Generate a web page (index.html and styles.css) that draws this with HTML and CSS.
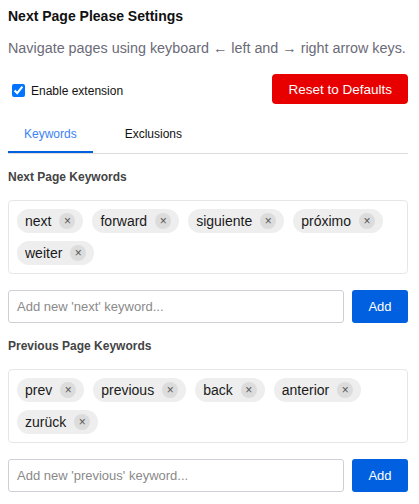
FILE: index.html
```html
<!DOCTYPE html>
<html>
<head>
<meta charset="utf-8">
<link rel="stylesheet" href="styles.css">
</head>
<body>
<div class="page">
  <h1 class="title">Next Page Please Settings</h1>
  <p class="desc">Navigate pages using keyboard ← left and → right arrow keys.</p>
  <div class="toprow">
    <label class="enable"><input type="checkbox" checked> Enable extension</label>
    <button class="reset">Reset to Defaults</button>
  </div>
  <div class="tabs">
    <div class="tab active">Keywords</div>
    <div class="tab">Exclusions</div>
  </div>
  <h2 class="heading">Next Page Keywords</h2>
  <div class="tagbox">
    <span class="tag">next<span class="x">×</span></span>
    <span class="tag">forward<span class="x">×</span></span>
    <span class="tag">siguiente<span class="x">×</span></span>
    <span class="tag">próximo<span class="x">×</span></span>
    <span class="tag">weiter<span class="x">×</span></span>
  </div>
  <div class="addrow">
    <input class="field" type="text" placeholder="Add new 'next' keyword...">
    <button class="add">Add</button>
  </div>
  <h2 class="heading">Previous Page Keywords</h2>
  <div class="tagbox">
    <span class="tag">prev<span class="x">×</span></span>
    <span class="tag">previous<span class="x">×</span></span>
    <span class="tag">back<span class="x">×</span></span>
    <span class="tag">anterior<span class="x">×</span></span>
    <span class="tag">zurück<span class="x">×</span></span>
  </div>
  <div class="addrow">
    <input class="field" type="text" placeholder="Add new 'previous' keyword...">
    <button class="add">Add</button>
  </div>
</div>
</body>
</html>
```
FILE: styles.css
```css
* { box-sizing: border-box; }
body {
  margin: 8px;
  font-family: "Liberation Sans", Arial, sans-serif;
  color: #111;
  background: #fff;
}
.page { width: 400px; }
.title {
  margin: 0;
  font-size: 14px;
  line-height: 17px;
  font-weight: bold;
  color: #111;
}
.desc {
  margin: 14px 0 0;
  font-size: 14.35px;
  line-height: 18px;
  color: #6b6b78;
  white-space: nowrap;
}
.toprow {
  margin-top: 17px;
  display: flex;
  justify-content: space-between;
  align-items: center;
}
.enable {
  display: flex;
  align-items: center;
  margin-top: 3px;
  font-size: 12px;
  color: #111;
  gap: 6px;
}
.enable input {
  margin: 0 0 0 4px;
  width: 13px;
  height: 13px;
}
.reset {
  height: 30px;
  padding: 0 16px;
  border: none;
  border-radius: 4px;
  background: #e80000;
  color: #fff;
  font-family: inherit;
  font-size: 13.5px;
}
.tabs {
  margin-top: 15px;
  display: flex;
  gap: 16px;
  border-bottom: 1px solid #ddd;
}
.tab {
  padding: 8px 16px 9px;
  font-size: 12px;
  line-height: 15px;
  color: #111;
  border-bottom: 2px solid transparent;
}
.tab.active {
  color: #3b82f6;
  border-bottom-color: #0060df;
}
.heading {
  margin: 15px 0 15px;
  font-size: 12px;
  line-height: 16px;
  font-weight: bold;
  color: #444;
}
.tagbox {
  border: 1px solid #e6e6e6;
  border-radius: 4px;
  padding: 8px;
  display: flex;
  flex-wrap: wrap;
  gap: 8px 9px;
}
.tag {
  display: inline-flex;
  align-items: center;
  height: 24px;
  padding: 0 8px 0 8px;
  border-radius: 12px;
  background: #eeeeee;
  font-size: 14px;
  color: #1a1a1a;
}
.x {
  margin-left: 8px;
  width: 16px;
  height: 16px;
  border-radius: 50%;
  background: #dcdcdc;
  color: #555;
  font-size: 12px;
  line-height: 16px;
  text-align: center;
}
.addrow {
  margin-top: 16px;
  display: flex;
  gap: 8px;
}
.field {
  flex: 1;
  height: 33px;
  border: 1px solid #cfcfd8;
  border-radius: 3px;
  padding: 0 8px;
  font-family: inherit;
  font-size: 13px;
  color: #111;
}
.field::placeholder { color: #8a8a8a; }
.add {
  width: 56px;
  height: 33px;
  border: none;
  border-radius: 3px;
  background: #0060df;
  color: #fff;
  font-family: inherit;
  font-size: 13px;
}
```
